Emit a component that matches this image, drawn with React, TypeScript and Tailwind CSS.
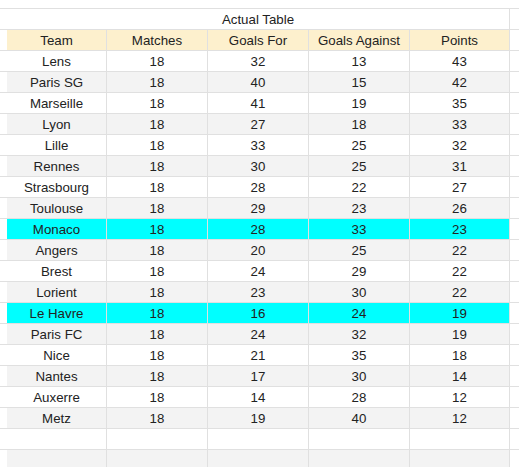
import React from 'react';

type Row = [string, number, number, number, number];

const rows: Row[] = [
  ['Lens', 18, 32, 13, 43],
  ['Paris SG', 18, 40, 15, 42],
  ['Marseille', 18, 41, 19, 35],
  ['Lyon', 18, 27, 18, 33],
  ['Lille', 18, 33, 25, 32],
  ['Rennes', 18, 30, 25, 31],
  ['Strasbourg', 18, 28, 22, 27],
  ['Toulouse', 18, 29, 23, 26],
  ['Monaco', 18, 28, 33, 23],
  ['Angers', 18, 20, 25, 22],
  ['Brest', 18, 24, 29, 22],
  ['Lorient', 18, 23, 30, 22],
  ['Le Havre', 18, 16, 24, 19],
  ['Paris FC', 18, 24, 32, 19],
  ['Nice', 18, 21, 35, 18],
  ['Nantes', 18, 17, 30, 14],
  ['Auxerre', 18, 14, 28, 12],
  ['Metz', 18, 19, 40, 12],
];

const highlighted = ['Monaco', 'Le Havre'];

const widths = ['w-[100px]', 'w-[101px]', 'w-[101px]', 'w-[101px]', 'w-[100px]'];

const Cells: React.FC<{ values: (string | number)[] }> = ({ values }) => (
  <>
    {values.map((v, i) => (
      <div
        key={i}
        className={`${widths[i]} shrink-0 h-full flex items-center justify-center pt-px border-r border-[#e0e0e0]`}
      >
        {v}
      </div>
    ))}
  </>
);

const App: React.FC = () => {
  return (
    <div
      className="w-[519px] h-[473px] overflow-hidden bg-white pt-[8px] text-[13.3px] text-[#222222]"
      style={{ fontFamily: '"Liberation Sans", Arial, sans-serif' }}
    >
      {/* title row */}
      <div className="flex h-[22px] border-y border-[#e0e0e0]">
        <div className="w-[7px] shrink-0" />
        <div className="w-[503px] shrink-0 flex items-center justify-center pt-px border-r border-[#e0e0e0]">
          Actual Table
        </div>
        <div className="flex-1" />
      </div>

      {/* header */}
      <div className="flex h-[21px] border-b border-[#e0e0e0]">
        <div className="w-[7px] shrink-0" />
        <div className="flex bg-[#fdf0cd]">
          <Cells values={['Team', 'Matches', 'Goals For', 'Goals Against', 'Points']} />
        </div>
        <div className="flex-1" />
      </div>

      {rows.map((r, idx) => {
        const bg = highlighted.includes(r[0])
          ? 'bg-[#00ffff]'
          : idx % 2 === 1
            ? 'bg-[#f3f3f3]'
            : 'bg-white';
        return (
          <div key={r[0]} className="flex h-[21px] border-b border-[#e0e0e0]">
            <div className="w-[7px] shrink-0" />
            <div className={`flex ${bg}`}>
              <Cells values={r} />
            </div>
            <div className="flex-1" />
          </div>
        );
      })}

      {/* empty rows */}
      <div className="flex h-[21px] border-b border-[#e0e0e0]">
        <div className="w-[7px] shrink-0" />
        <div className="flex bg-white">
          <Cells values={['', '', '', '', '']} />
        </div>
        <div className="flex-1" />
      </div>
      <div className="flex h-[17px]">
        <div className="w-[7px] shrink-0" />
        <div className="flex bg-[#f3f3f3]">
          <Cells values={['', '', '', '', '']} />
        </div>
        <div className="flex-1" />
      </div>
    </div>
  );
};

export default App;
